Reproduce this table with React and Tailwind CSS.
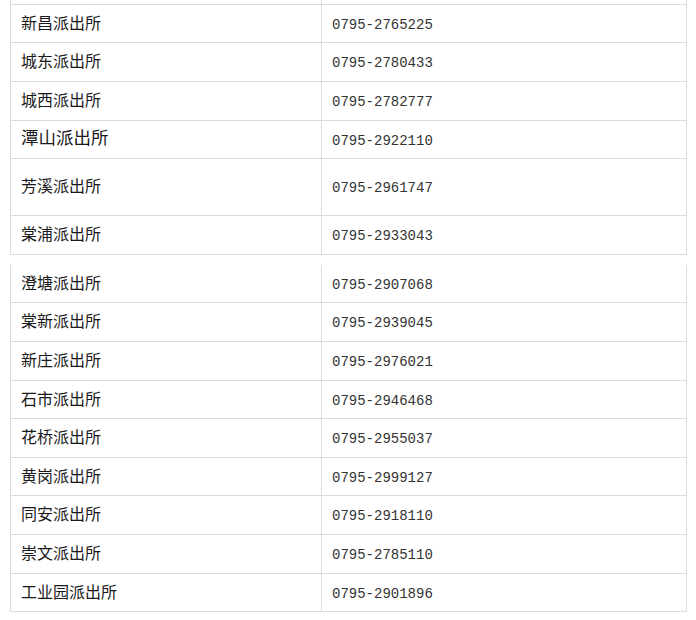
import React from "react";

const tableOne = [
  { name: "新昌派出所", phone: "0795-2765225", h: "h-[38px]" },
  { name: "城东派出所", phone: "0795-2780433", h: "h-[39px]" },
  { name: "城西派出所", phone: "0795-2782777", h: "h-[39px]" },
  { name: "潭山派出所", phone: "0795-2922110", h: "h-[38px]", big: true },
  { name: "芳溪派出所", phone: "0795-2961747", h: "h-[57px]" },
  { name: "棠浦派出所", phone: "0795-2933043", h: "h-[39px]" },
];

const tableTwo = [
  { name: "澄塘派出所", phone: "0795-2907068", h: "h-[38px]" },
  { name: "棠新派出所", phone: "0795-2939045", h: "h-[39px]" },
  { name: "新庄派出所", phone: "0795-2976021", h: "h-[39px]" },
  { name: "石市派出所", phone: "0795-2946468", h: "h-[38px]" },
  { name: "花桥派出所", phone: "0795-2955037", h: "h-[39px]" },
  { name: "黄岗派出所", phone: "0795-2999127", h: "h-[38px]" },
  { name: "同安派出所", phone: "0795-2918110", h: "h-[39px]" },
  { name: "崇文派出所", phone: "0795-2785110", h: "h-[39px]" },
  { name: "工业园派出所", phone: "0795-2901896", h: "h-[38px]" },
];

const Row = ({ row }) => (
  <div className={`flex border-b border-[#dcdcdc] ${row.h}`}>
    <div className="w-[311px] border-l border-[#dcdcdc] pl-[10px] pb-[4px] flex items-center">
      <span
        className={
          row.big
            ? "text-[17.5px] text-[#1a1a1a]"
            : "text-[16px] text-[#1a1a1a]"
        }
      >
        {row.name}
      </span>
    </div>
    <div className="w-[366px] border-l border-r border-[#dcdcdc] pl-[10px] pt-[3px] flex items-center">
      <span className="text-[14px] text-[#333] font-['Liberation_Mono',monospace]">
        {row.phone}
      </span>
    </div>
  </div>
);

const App = () => {
  return (
    <div className="w-[696px] h-[620px] bg-white overflow-hidden font-['Noto_Sans_CJK_SC','Noto_Sans',sans-serif]">
      <div className="ml-[10px] w-[677px]">
        {/* tail of the row above the crop */}
        <div className="flex border-b border-[#dcdcdc] h-[5px]">
          <div className="w-[311px] border-l border-[#dcdcdc]" />
          <div className="w-[366px] border-l border-r border-[#dcdcdc]" />
        </div>
        {tableOne.map((row) => (
          <Row key={row.name} row={row} />
        ))}
      </div>

      <div className="ml-[10px] w-[677px] mt-[10px]">
        {tableTwo.map((row) => (
          <Row key={row.name} row={row} />
        ))}
      </div>
    </div>
  );
};

export default App;
